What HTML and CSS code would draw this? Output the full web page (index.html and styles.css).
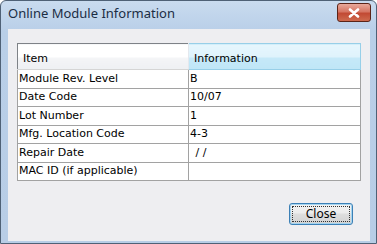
FILE: index.html
```html
<!DOCTYPE html>
<html>
<head>
<meta charset="utf-8">
<link rel="stylesheet" href="styles.css">
</head>
<body>
<div class="window">
  <div class="titlebar">
    <span class="title">Online Module Information</span>
    <div class="close-x"><svg width="14" height="10" viewBox="0 0 14 10"><path d="M3 1.5 L11 8.5 M11 1.5 L3 8.5" stroke="#fff" stroke-width="2.6" stroke-linecap="round" fill="none"/><path d="M3 1.5 L11 8.5 M11 1.5 L3 8.5" stroke="#fff" stroke-width="1.6" fill="none"/></svg></div>
  </div>
  <div class="client">
    <table class="grid">
      <thead>
        <tr><th class="h-item">Item</th><th class="h-info">Information</th></tr>
      </thead>
      <tbody>
        <tr><td>Module Rev. Level</td><td>B</td></tr>
        <tr><td>Date Code</td><td>10/07</td></tr>
        <tr><td>Lot Number</td><td>1</td></tr>
        <tr><td>Mfg. Location Code</td><td>4-3</td></tr>
        <tr><td>Repair Date</td><td class="date">&nbsp;/&nbsp;/</td></tr>
        <tr><td>MAC ID (if applicable)</td><td></td></tr>
      </tbody>
    </table>
    <div class="actions">
      <button class="btn"><span class="focus">Close</span></button>
    </div>
  </div>
</div>
</body>
</html>
```

FILE: styles.css
```css
html, body {
  margin: 0;
  padding: 0;
  background: #ffffff;
}
.window {
  width: 377px;
  height: 244px;
  box-sizing: border-box;
  border: 1px solid #4f6176;
  border-radius: 6px 6px 0 0;
  background: linear-gradient(#c9dbef, #b9cfe8 30px, #b8cde6);
  display: flex;
  flex-direction: column;
  overflow: hidden;
}
.titlebar {
  height: 28px;
  flex: none;
  display: flex;
  align-items: center;
  justify-content: space-between;
  padding: 0 5px 0 7px;
}
.title {
  font-family: "Noto Sans", sans-serif;
  font-size: 13px;
  color: #1b2d44;
  margin-top: -4px;
}
.close-x {
  width: 32px;
  height: 17px;
  border: 1px solid #5b2418;
  border-radius: 3px;
  background: linear-gradient(#e9a99b, #d67664 45%, #c24a34 55%, #cd6a4e);
  display: flex;
  align-items: center;
  justify-content: center;
  margin-top: -5px;
}
.client {
  flex: 1;
  margin: 0 6px 2px 7px;
  background: #eeeef1;
  padding: 14px 9px 0 9px;
  border: 0;
  display: flex;
  flex-direction: column;
}
.grid {
  width: 344px;
  border-collapse: collapse;
  border: 1px solid #7e8287;
  background: #ffffff;
  font-family: "DejaVu Sans", sans-serif;
  font-size: 11px;
  color: #000;
  table-layout: fixed;
}
.grid th {
  height: 26px;
  font-weight: normal;
  text-align: left;
  padding: 3px 0 0 5px;
  box-sizing: border-box;
}
.h-item {
  width: 171px;
  background: linear-gradient(#ffffff, #ffffff 50%, #f4f5f7 51%, #eef0f3);
  border-right: 1px solid #e4e8ee;
  border-bottom: 1px solid #d5d5d5;
}
.h-info {
  background: linear-gradient(#e6f6fd, #dff3fc 50%, #c6e9f8 51%, #bfe6f7);
  border: 1px solid #97cfe8;
}
.grid td {
  height: 18.5px;
  padding: 0 0 0 1px;
  box-sizing: border-box;
  border: 1px solid #a2a2a2;
  white-space: nowrap;
  overflow: hidden;
  line-height: 16px;
}
.grid td.date {
  padding-left: 3px;
}
.actions {
  display: flex;
  justify-content: flex-end;
  padding: 22px 8px 0 0;
}
.btn {
  width: 64px;
  height: 22px;
  border: 1px solid #3c80b6;
  border-radius: 3px;
  background: linear-gradient(#f3f3f3, #ececec 45%, #dedede 50%, #d2d2d2);
  padding: 2px;
  margin: 0;
  box-shadow: inset 0 0 0 1px #a4d4f0;
  font-family: "Noto Sans", sans-serif;
  font-size: 12px;
  color: #000;
  display: flex;
}
.focus {
  flex: 1;
  border: 1px dotted #333;
  display: flex;
  align-items: center;
  justify-content: center;
  line-height: 14px;
}
```
